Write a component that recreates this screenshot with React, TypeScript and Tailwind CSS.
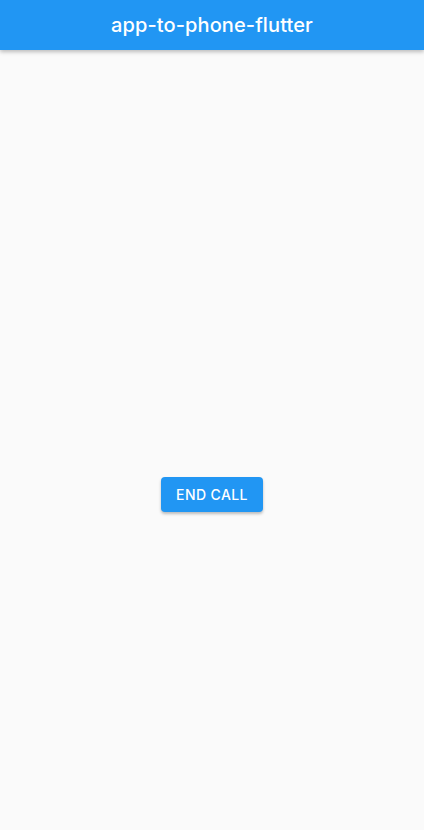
import React from "react";

export default function App() {
  return (
    <div className="relative w-[424px] h-[830px] overflow-hidden bg-[#fafafa] flex flex-col" style={{ fontFamily: "Inter, 'Noto Sans', sans-serif" }}>
      <header className="h-[50px] bg-[#2196f3] flex items-center justify-center shadow-[0_2px_4px_rgba(0,0,0,0.25)] z-10 shrink-0">
        <h1 className="text-white text-[20px] font-medium leading-none tracking-[0.1px]">app-to-phone-flutter</h1>
      </header>
      <main className="flex-1 flex flex-col items-center pt-[427px]">
        <button className="w-[102px] h-[35px] rounded-[4px] bg-[#2196f3] text-white text-[14px] font-medium tracking-[0.4px] shadow-[0_2px_3px_rgba(0,0,0,0.25)]">
          END CALL
        </button>
      </main>
      <div className="absolute -top-[6px] -right-[6px] w-[10px] h-[10px] rounded-full bg-[#b13050] blur-[3px] opacity-70" />
    </div>
  );
}
